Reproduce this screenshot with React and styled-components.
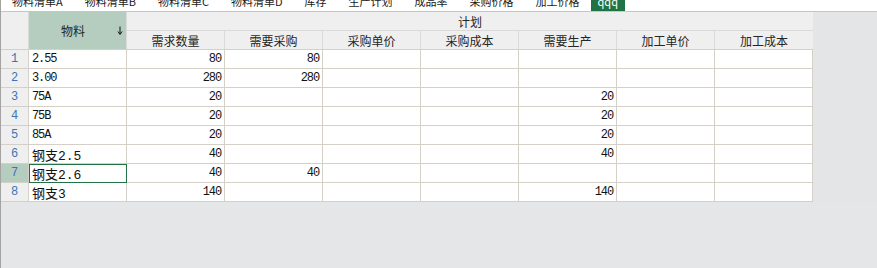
import React from 'react';
import styled, { createGlobalStyle, css } from 'styled-components';

const GlobalStyle = createGlobalStyle`
  html, body {
    margin: 0;
    padding: 0;
    background: #e5e6e8;
  }
  * {
    box-sizing: border-box;
  }
`;

const Page = styled.div`
  width: 877px;
  height: 268px;
  display: flex;
  flex-direction: column;
  border-left: 1px solid #a3a3a3;
  background: #e5e6e8;
  overflow: hidden;
`;

const TabBar = styled.div`
  display: flex;
  height: 12px;
  flex: none;
  background: #fff;
  border-bottom: 1px solid #c6c6c6;
  overflow: hidden;
`;

const Tab = styled.div`
  display: flex;
  padding: 0 ${(p) => (p.$active ? '7px' : '11px')};
  height: 11px;
  font-family: 'Noto Sans CJK SC', sans-serif;
  font-size: 11px;
  line-height: 11px;
  white-space: nowrap;
  color: ${(p) => (p.$active ? '#fff' : '#1a1a1a')};
  background: ${(p) => (p.$active ? '#217346' : 'transparent')};

  span {
    display: block;
    margin-top: -4px;
  }
`;

const SheetRow = styled.div`
  display: flex;
  align-items: flex-start;
`;

const Sheet = styled.div`
  display: grid;
  grid-template-columns: 28px repeat(8, 98px);
  grid-auto-rows: 19px;
  flex: none;
`;

const headBase = css`
  display: flex;
  align-items: center;
  justify-content: center;
  background: #efefef;
  border-right: 1px solid #dadada;
  border-bottom: 1px solid #dadada;
  font-family: 'Noto Sans CJK SC', sans-serif;
  font-size: 12px;
  color: #262626;
`;

const Corner = styled.div`
  ${headBase};
  grid-row: 1 / span 2;
  grid-column: 1;
  border-bottom-color: #d4d0c8;
`;

const SortHead = styled.div`
  ${headBase};
  grid-row: 1 / span 2;
  grid-column: 2;
  background: #b4cdbf;
  border-bottom-color: #d4d0c8;
  padding-right: 3px;

  span {
    flex: 1;
    text-align: center;
  }
`;

const GroupHead = styled.div`
  ${headBase};
  grid-row: 1;
  grid-column: 3 / span 7;
  border-right: none;
`;

const ColHead = styled.div`
  ${headBase};
  grid-row: 2;
  border-bottom-color: #d4d0c8;
  ${(p) => p.$last && 'border-right: none;'}
`;

const RowNum = styled.div`
  display: flex;
  align-items: center;
  justify-content: center;
  background: ${(p) => (p.$selected ? '#b4cdbf' : '#efefef')};
  border-right: 1px solid #d4d0c8;
  border-bottom: 1px solid #d4d0c8;
  font-family: 'Liberation Mono', monospace;
  font-size: 12px;
  color: #3b75b6;
`;

const Cell = styled.div`
  display: flex;
  align-items: center;
  justify-content: ${(p) => (p.$num ? 'flex-end' : 'flex-start')};
  padding: 0 3px;
  background: #fff;
  border-right: 1px solid #d4d0c8;
  border-bottom: 1px solid #d4d0c8;
  font-family: 'Liberation Mono', 'Noto Sans CJK SC', monospace;
  font-size: ${(p) => (p.$cjk ? '13px' : '12px')};
  letter-spacing: ${(p) => (p.$cjk ? '0' : '-1.1px')};
  color: #111;
  white-space: nowrap;
  overflow: hidden;
  ${(p) =>
    p.$active &&
    css`
      outline: 1px solid #217346;
      outline-offset: -1px;
    `}
`;

const Filler = styled.div`
  flex: 1;
  align-self: stretch;
  background: #e4e5e7;
`;

const tabs = ['物料清单A', '物料清单B', '物料清单C', '物料清单D', '库存', '生产计划', '成品率', '采购价格', '加工价格', 'qqq'];

const subHeads = ['需求数量', '需要采购', '采购单价', '采购成本', '需要生产', '加工单价', '加工成本'];

const rows = [
  ['2.55', 80, 80, '', '', '', '', ''],
  ['3.00', 280, 280, '', '', '', '', ''],
  ['75A', 20, '', '', '', 20, '', ''],
  ['75B', 20, '', '', '', 20, '', ''],
  ['85A', 20, '', '', '', 20, '', ''],
  ['钢支2.5', 40, '', '', '', 40, '', ''],
  ['钢支2.6', 40, 40, '', '', '', '', ''],
  ['钢支3', 140, '', '', '', 140, '', ''],
];

const SortArrow = () => (
  <svg width="6" height="9" viewBox="0 0 6 9">
    <path d="M3 0.5 V8" stroke="#111" strokeWidth="1" />
    <path d="M1 5.5 L3 8.5 L5 5.5" fill="none" stroke="#111" strokeWidth="1" />
  </svg>
);

function App() {
  return (
    <>
      <GlobalStyle />
      <Page>
        <TabBar>
          {tabs.map((t) => (
            <Tab key={t} $active={t === 'qqq'}>
              <span>{t}</span>
            </Tab>
          ))}
        </TabBar>
        <SheetRow>
          <Sheet>
            <Corner />
            <SortHead>
              <span>物料</span>
              <SortArrow />
            </SortHead>
            <GroupHead>计划</GroupHead>
            {subHeads.map((h, i) => (
              <ColHead key={h} $last={i === subHeads.length - 1}>
                {h}
              </ColHead>
            ))}
            {rows.map((r, ri) => (
              <React.Fragment key={ri}>
                <RowNum $selected={ri === 6}>{ri + 1}</RowNum>
                {r.map((v, ci) => (
                  <Cell
                    key={ci}
                    $num={ci > 0}
                    $cjk={ci === 0 && /[^\x00-\x7f]/.test(v)}
                    $active={ri === 6 && ci === 0}
                  >
                    {v}
                  </Cell>
                ))}
              </React.Fragment>
            ))}
          </Sheet>
          <Filler />
        </SheetRow>
      </Page>
    </>
  );
}

export default App;
